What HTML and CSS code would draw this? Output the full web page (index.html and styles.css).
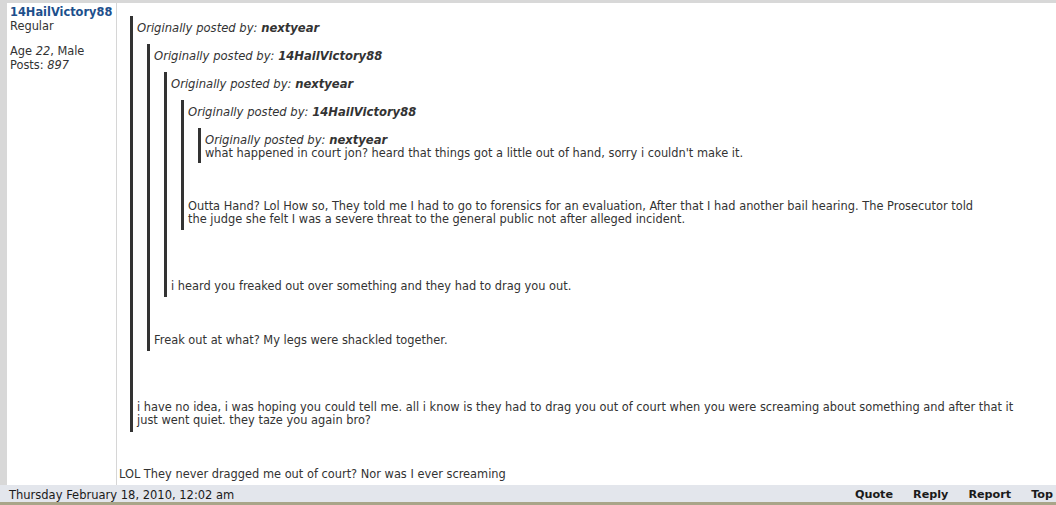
FILE: index.html
```html
<!DOCTYPE html>
<html>
<head>
<meta charset="utf-8">
<link rel="stylesheet" href="styles.css">
</head>
<body>
<div class="page">
  <div class="post">
    <div class="user">
      <div class="uname">14HailVictory88</div>
      <div>Regular</div>
      <div class="spacer"></div>
      <div>Age <i>22</i>, Male</div>
      <div>Posts: <i>897</i></div>
    </div>
    <div class="content">
      <div class="quote q1">
        <div class="qhead">Originally posted by: <b>nextyear</b></div>
        <div class="quote q2">
          <div class="qhead">Originally posted by: <b>14HailVictory88</b></div>
          <div class="quote q3">
            <div class="qhead">Originally posted by: <b>nextyear</b></div>
            <div class="quote q4">
              <div class="qhead">Originally posted by: <b>14HailVictory88</b></div>
              <div class="quote q5">
                <div class="qhead">Originally posted by: <b>nextyear</b></div>
                <div class="qbody">what happened in court jon? heard that things got a little out of hand, sorry i couldn't make it.</div>
              </div>
              <div class="qbody gap-s">Outta Hand? Lol How so, They told me I had to go to forensics for an evaluation, After that I had another bail hearing. The Prosecutor told<br>the judge she felt I was a severe threat to the general public not after alleged incident.</div>
            </div>
            <div class="qbody gap-l">i heard you freaked out over something and they had to drag you out.</div>
          </div>
          <div class="qbody gap-s">Freak out at what? My legs were shackled together.</div>
        </div>
        <div class="qbody gap-l">i have no idea, i was hoping you could tell me. all i know is they had to drag you out of court when you were screaming about something and after that it<br>just went quiet. they taze you again bro?</div>
      </div>
      <div class="message">LOL They never dragged me out of court? Nor was I ever screaming</div>
    </div>
  </div>
  <div class="footer">
    <span class="date">Thursday February 18, 2010, 12:02 am</span>
    <nav class="actions">
      <span>Quote</span>
      <span>Reply</span>
      <span>Report</span>
      <span>Top</span>
    </nav>
  </div>
  <div class="edge"></div>
</div>
</body>
</html>
```

FILE: styles.css
```css
html, body {
  margin: 0;
  padding: 0;
}
body {
  background: #ece9d8;
  font-family: "DejaVu Sans", Verdana, sans-serif;
  font-size: 11.4px;
  color: #333333;
  overflow: hidden;
}
.page {
  background: #d8d8d8;
  padding-top: 3px;
  width: 1056px;
}
.post {
  display: flex;
  margin-left: 7px;
  height: 482px;
  background: #ffffff;
}
.user {
  width: 106px;
  padding: 2px 0 0 3px;
  border-right: 1px solid #d6d6d6;
  line-height: 14px;
  color: #333333;
}
.uname {
  color: #1d4f8c;
  font-weight: bold;
}
.spacer {
  height: 11px;
}
.content {
  flex: 1;
  padding: 13px 0 0 0;
  display: flex;
  flex-direction: column;
}
.quote {
  border-left: 3px solid #333333;
  padding: 5px 0 4px 4px;
  line-height: 13px;
}
.q1 {
  margin-left: 13px;
  padding-bottom: 5px;
}
.q2, .q3, .q4, .q5 {
  margin-left: 10px;
  margin-top: 9px;
}
.q5 {
  padding-bottom: 3px;
}
.qhead {
  font-style: italic;
  font-size: 11.6px;
  line-height: 14px;
}
.qbody {
  white-space: nowrap;
}
.gap-s {
  margin-top: 37px;
}
.gap-l {
  margin-top: 50px;
}
.message {
  margin: 36px 0 0 2px;
  line-height: 13px;
}
.footer {
  display: flex;
  justify-content: space-between;
  align-items: flex-start;
  height: 17px;
  overflow: hidden;
  background: #e3e6ec;
  color: #1a1a1a;
  font-size: 11.5px;
  line-height: 14px;
  padding: 3px 0 0 9px;
  box-sizing: border-box;
}
.actions {
  display: flex;
  gap: 20px;
  padding-right: 3px;
  font-weight: bold;
  font-size: 11.2px;
}
.edge {
  height: 3px;
  background: #a9a589;
}
```
